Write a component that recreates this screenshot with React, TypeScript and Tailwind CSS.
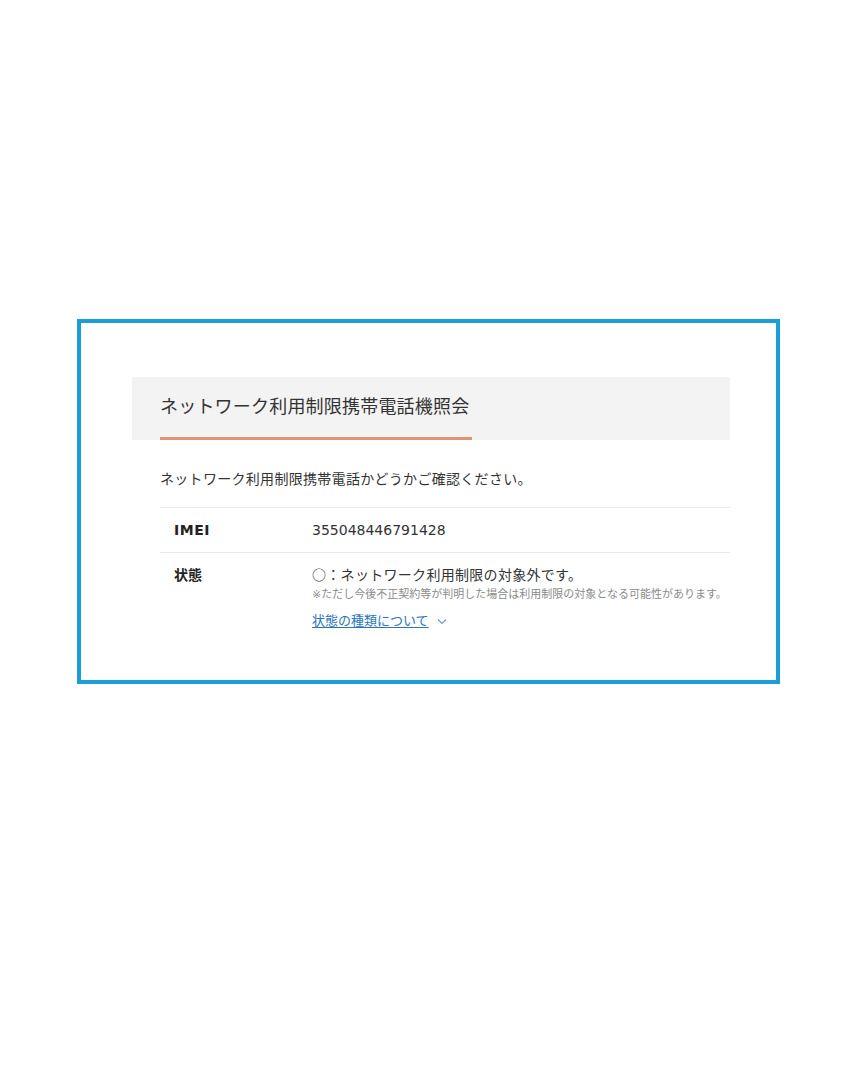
import React from "react";

export default function App() {
  return (
    <div
      className="w-[852px] h-[1080px] bg-white pt-[319px]"
      style={{ fontFamily: '"DejaVu Sans", "Noto Sans CJK JP", sans-serif' }}
    >
      <div className="ml-[77px] w-[703px] h-[365px] border-[4px] border-[#1b9dd6] pt-[54px] pl-[51px] pr-[46px]">
        <div className="bg-[#f3f3f3] h-[63px] flex flex-col">
          <div className="flex-1 flex items-center pl-[28px]">
            <span className="text-[18px] leading-[24px] text-[#333333] tracking-[0.2px]">
              ネットワーク利用制限携帯電話機照会
            </span>
          </div>
          <div className="ml-[28px] w-[312px] h-[3px] bg-[#e3936c]" />
        </div>
        <div className="pl-[28px]">
          <p className="mt-[29px] text-[14px] leading-[20px] text-[#333333] tracking-[0.3px]">
            ネットワーク利用制限携帯電話かどうかご確認ください。
          </p>
          <div className="mt-[18px] border-t border-[#ebebeb]">
            <div className="flex px-[14px] py-[12px] border-b border-[#ebebeb]">
              <div className="w-[138px] shrink-0 text-[14px] leading-[20px] font-bold text-[#222222] tracking-[0.5px]">
                IMEI
              </div>
              <div className="text-[14px] leading-[20px] text-[#333333]">355048446791428</div>
            </div>
            <div className="flex px-[14px] pt-[12px]">
              <div className="w-[138px] shrink-0 text-[14px] leading-[20px] font-bold text-[#222222]">
                状態
              </div>
              <div className="flex flex-col min-w-0">
                <div className="-mt-[1px] text-[14px] leading-[20px] text-[#333333] tracking-[0.3px] whitespace-nowrap">
                  <span className="font-['Noto_Sans_CJK_JP',sans-serif]">○：</span>ネットワーク利用制限の対象外です。
                </div>
                <div className="mt-[2px] text-[11px] leading-[16px] text-[#8a8a8a] whitespace-nowrap">
                  ※ただし今後不正契約等が判明した場合は利用制限の対象となる可能性があります。
                </div>
                <div className="mt-[9px] flex items-center gap-[8px]">
                  <span className="text-[13px] leading-[18px] text-[#2b75b8] underline underline-offset-[2px] whitespace-nowrap">
                    状態の種類について
                  </span>
                  <svg width="10" height="7" viewBox="0 0 10 7" fill="none">
                    <path d="M1 1.5 L5 5.5 L9 1.5" stroke="#6a9bd0" strokeWidth="1.2" />
                  </svg>
                </div>
              </div>
            </div>
          </div>
        </div>
      </div>
    </div>
  );
}
